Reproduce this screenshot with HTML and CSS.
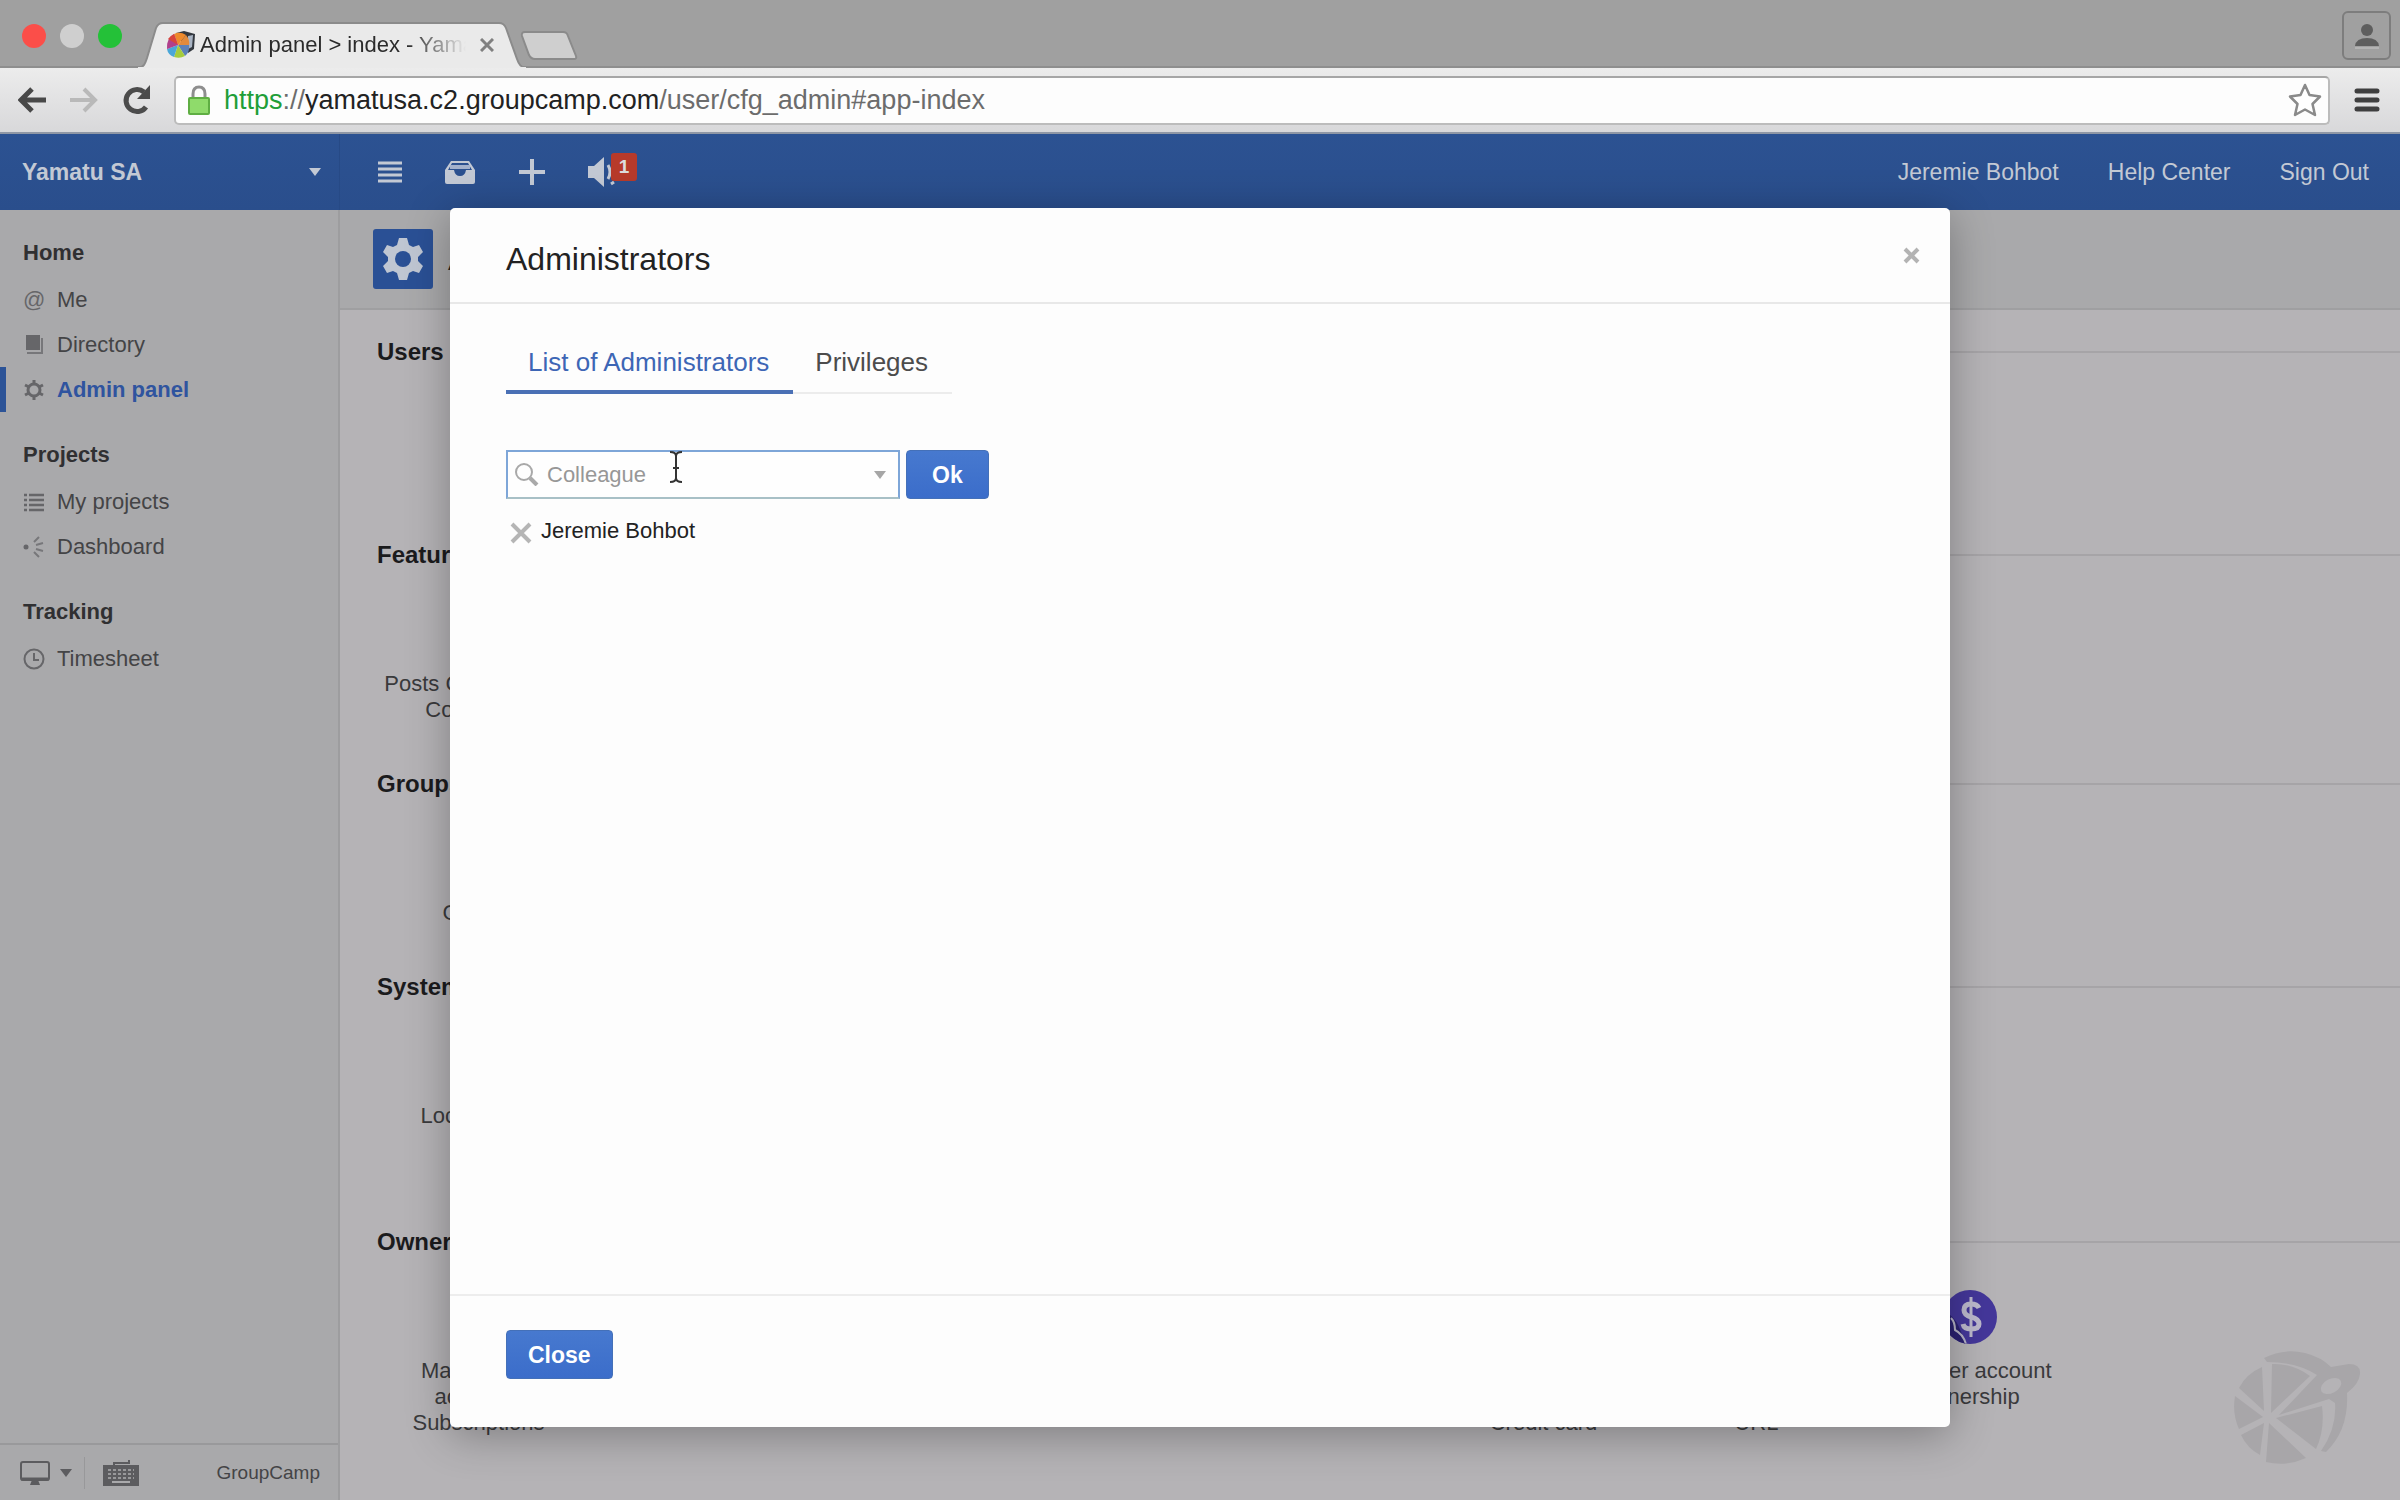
FILE: index.html
```
<!DOCTYPE html>
<html lang="en">
<head>
  <meta charset="UTF-8" />
  <meta name="viewport" content="width=device-width, initial-scale=1.0"/>
  <title>Admin panel &gt; index - Yamatu SA</title>
  <link rel="stylesheet" href="styles.css">
</head>
<body>
  <!-- browser window -->
  <div class="tabstrip">
    <div class="lights">
      <span class="light red"></span>
      <span class="light gray"></span>
      <span class="light green"></span>
    </div>
    <div class="tab">
      <svg class="tab-shape" viewBox="0 0 388 46" preserveAspectRatio="none">
        <path d="M0 46 C6 45 7 42 9 36 L18 6 Q20 1 25 1 H361 Q366 1 368 6 L379 37 C381 43 383 45 388 46 Z" fill="#eaeaea" stroke="#8b8b8b" stroke-width="2"/>
        <path d="M0 46 H388" stroke="#eaeaea" stroke-width="2"/>
      </svg>
      <svg class="favicon" viewBox="0 0 30 28">
        <path d="M10 2 L18 0 L29 3 L28 18 L22 22 Z" fill="#33383f"/>
        <path d="M22 5 L27 4 L26 16 L22 18 Z" fill="#a9b4c4"/>
        <path d="M12 14 L8 3 Q14 0 20 4 Z" fill="#ee8a2c"/>
        <path d="M12 14 L20 4 Q24 9 23 14 Z" fill="#e08a3c"/>
        <path d="M12 14 L23 14 Q24 21 19 25 Z" fill="#5b81b8"/>
        <path d="M12 14 L19 25 Q14 28 8 26 Z" fill="#a5cc3c"/>
        <path d="M12 14 L8 26 Q2 24 1 18 Z" fill="#4aa7d8"/>
        <path d="M12 14 L1 18 Q0 8 8 3 Z" fill="#b0408c"/>
        <path d="M12 14 L2 8 Q4 5 8 3 Z" fill="#d8443c"/>
      </svg>
      <span class="tab-title">Admin panel &gt; index - Yamatu</span>
      <button class="tab-close" aria-label="Close tab">
        <svg width="14" height="14" viewBox="0 0 14 14"><path d="M1 1 L13 13 M13 1 L1 13" stroke="#808080" stroke-width="3"/></svg>
      </button>
    </div>
    <button class="newtab" aria-label="New tab">
      <svg width="60" height="30" viewBox="0 0 60 30"><path d="M5 1 H43 Q47 1 48 5 L56 25 Q57 28 54 28 H15 Q11 28 9 24 L2 5 Q1 1 5 1 Z" fill="#cfcfcf" stroke="#8b8b8b" stroke-width="2"/></svg>
    </button>
    <button class="profile" aria-label="Profile">
      <svg width="26" height="26" viewBox="0 0 26 26"><circle cx="13" cy="7" r="6" fill="#5e5e5e"/><path d="M1 23 Q2 15 13 15 Q24 15 25 23 Z" fill="#5e5e5e"/><path d="M1 25 H25" stroke="#b4b4b4" stroke-width="2"/></svg>
    </button>
  </div>

  <div class="toolbar">
    <button aria-label="Back"><svg width="28" height="26" viewBox="0 0 28 26"><path d="M14 2 L3 13 L14 24 M3 13 H28" fill="none" stroke="#484848" stroke-width="5"/></svg></button>
    <button aria-label="Forward"><svg width="28" height="26" viewBox="0 0 28 26"><path d="M14 2 L25 13 L14 24 M25 13 H0" fill="none" stroke="#b9b9b9" stroke-width="4"/></svg></button>
    <button aria-label="Reload"><svg width="28" height="30" viewBox="0 0 28 30"><path d="M24 22 A11 11 0 1 1 22 7" fill="none" stroke="#4c4c4c" stroke-width="5"/><path d="M28 0 V14 H15 Z" fill="#4c4c4c"/></svg></button>
    <div class="address" role="textbox" aria-label="Address">
      <svg width="22" height="30" viewBox="0 0 22 30"><path d="M5 15 V9 Q5 2 11 2 Q17 2 17 9 V15" fill="none" stroke="#8e8e8e" stroke-width="3"/><rect x="1" y="13" width="20" height="16" rx="1" fill="#8fdb6b" stroke="#5fae43" stroke-width="2"/></svg>
      <span class="url"><span class="scheme">https</span><span class="path">://</span>yamatusa.c2.groupcamp.com<span class="path">/user/cfg_admin#app-index</span></span>
      <svg class="star" width="34" height="34" viewBox="0 0 34 34"><path d="M17 2 L21.500 12 L32 13.500 L24.500 21 L27 32 L17 26.500 L7 32 L9.500 21 L2 13.500 L12.500 12 Z" fill="#fff" stroke="#8a8a8a" stroke-width="2.500" stroke-linejoin="round"/></svg>
    </div>
    <button aria-label="Menu"><svg width="26" height="26" viewBox="0 0 26 26"><path d="M3 4 H23 M3 13 H23 M3 22 H23" stroke="#3f3f3f" stroke-width="5" stroke-linecap="round"/></svg></button>
  </div>

  <!-- GroupCamp -->
  <div class="app">
    <header class="nav">
      <button class="company">Yamatu SA <span class="caret"></span></button>
      <div class="nav-icons">
        <button aria-label="Menu"><svg width="24" height="22" viewBox="0 0 24 22"><path d="M0 2 H24 M0 8 H24 M0 14 H24 M0 20 H24" stroke="#c3c9d4" stroke-width="3"/></svg></button>
        <button aria-label="Inbox"><svg width="32" height="24" viewBox="0 0 32 24"><path d="M7 1 H25 L31 10 V22 Q31 24 29 24 H3 Q1 24 1 22 V10 Z" fill="#c3c9d4"/><path d="M8 3 H24 L28 10 H22 Q21 16 16 16 Q11 16 10 10 H4 Z" fill="#2b508f"/><path d="M6 7 H26" stroke="#a3b1cc" stroke-width="4"/></svg></button>
        <button aria-label="Add"><svg width="28" height="28" viewBox="0 0 28 28"><path d="M14 1 V27 M1 14 H27" stroke="#c3c9d4" stroke-width="4"/></svg></button>
        <button class="alerts" aria-label="Notifications">
          <svg width="28" height="30" viewBox="0 0 28 30"><path d="M0 9 H6 L16 0 V30 L6 21 H0 Z" fill="#c3c9d4"/><path d="M20 8 Q24 15 20 22 M23 27 L26 25" fill="none" stroke="#c3c9d4" stroke-width="3"/></svg>
          <span class="badge">1</span>
        </button>
      </div>
      <nav class="nav-links">
        <a href="#">Jeremie Bohbot</a>
        <a href="#">Help Center</a>
        <a href="#">Sign Out</a>
      </nav>
    </header>

    <div class="main">
      <aside class="sidebar">
        <nav class="menu">
          <h2>Home</h2>
          <a href="#"><span class="icon at">@</span>Me</a>
          <a href="#"><svg class="icon" viewBox="0 0 22 22"><path d="M3 1 H17 V16 H3 Z" fill="#666669"/><path d="M4 19 H19 V4" fill="none" stroke="#77777a" stroke-width="2"/></svg>Directory</a>
          <a href="#" class="active"><svg class="icon" viewBox="0 0 22 22"><circle cx="11" cy="11" r="6" fill="none" stroke="#666669" stroke-width="3"/><path d="M11 1 V5 M11 17 V21 M2 6 L6 8 M16 14 L20 16 M2 16 L6 14 M16 8 L20 6" stroke="#666669" stroke-width="3"/></svg>Admin panel</a>
          <h2>Projects</h2>
          <a href="#"><svg class="icon" viewBox="0 0 22 22"><path d="M1 4 H4 M1 9 H4 M1 14 H4 M1 19 H4 M6 4 H21 M6 9 H21 M6 14 H21 M6 19 H21" stroke="#666669" stroke-width="2.500"/></svg>My projects</a>
          <a href="#"><svg class="icon" viewBox="0 0 22 22"><circle cx="3" cy="11" r="2.500" fill="#666669"/><path d="M11 6 L16 1 M13 9 L20 7 M13 13 L20 15 M11 16 L16 21" stroke="#77777a" stroke-width="2"/></svg>Dashboard</a>
          <h2>Tracking</h2>
          <a href="#"><svg class="icon" viewBox="0 0 22 22"><circle cx="11" cy="11" r="9.500" fill="none" stroke="#666669" stroke-width="2"/><path d="M11 5 V12 H16" fill="none" stroke="#666669" stroke-width="2"/></svg>Timesheet</a>
        </nav>
        <div class="side-foot">
          <button class="screen" aria-label="Display">
            <svg width="30" height="26" viewBox="0 0 30 26"><rect x="1" y="2" width="28" height="18" rx="2" fill="none" stroke="#5c5c5f" stroke-width="2"/><path d="M1 19 H29" stroke="#5c5c5f" stroke-width="3"/><path d="M12 20 H18 L20 25 H10 Z" fill="#5c5c5f"/></svg>
            <span class="caret"></span>
          </button>
          <button class="keys" aria-label="Keyboard shortcuts">
            <svg width="38" height="28" viewBox="0 0 38 28"><path d="M12 7 V4 H27 V1" fill="none" stroke="#5c5c5f" stroke-width="2"/><rect x="1" y="6" width="36" height="21" fill="#5c5c5f"/><path d="M6 11 H32 M6 15 H32 M6 19 H32" stroke="#98989a" stroke-width="2" stroke-dasharray="3 2"/><path d="M10 23 H28" stroke="#a9a9ab" stroke-width="2"/></svg>
          </button>
          <a href="#">GroupCamp</a>
        </div>
      </aside>

      <main class="content">
        <div class="page-head">
          <svg width="60" height="60" viewBox="0 0 60 60"><rect width="60" height="60" rx="3" fill="#2a5095"/><path d="M26 9 H34 L36 16 L40 18 L46 16 L50 23 L45 28 V32 L50 37 L46 44 L40 42 L36 44 L34 51 H26 L24 44 L20 42 L14 44 L10 37 L15 32 V28 L10 23 L14 16 L20 18 L24 16 Z" fill="#bfc6d2"/><circle cx="30" cy="30" r="8" fill="#2a5095"/></svg>
          <h1>Admin panel</h1>
        </div>

        <div class="sections">
          <section>
            <h3>Users</h3>
            <div class="tiles">
              <a href="#" class="tile"><span class="dot"></span>Add</a>
            </div>
          </section>
          <section>
            <h3>Features</h3>
            <div class="tiles">
              <a href="#" class="tile"><span class="dot"></span>Posts Categories &amp;<br>Comments</a>
            </div>
          </section>
          <section>
            <h3>Groups</h3>
            <div class="tiles">
              <a href="#" class="tile"><span class="dot"></span>Groups</a>
            </div>
          </section>
          <section>
            <h3>System</h3>
            <div class="tiles">
              <a href="#" class="tile"><span class="dot"></span>Localization</a>
              <a href="#" class="tile"><span class="dot"></span>Logo<br>and<br>colors</a>
            </div>
          </section>
          <section>
            <h3>Owner</h3>
            <div class="tiles">
              <a href="#" class="tile"><span class="dot"></span>Manage my<br>accounts<br>Subscriptions</a>
              <a href="#" class="tile"><span class="dot"></span>Invoices</a>
              <a href="#" class="tile"><span class="dot"></span>Storage</a>
              <a href="#" class="tile"><span class="dot"></span>Backup</a>
              <a href="#" class="tile"><span class="dot"></span>Security</a>
              <a href="#" class="tile"><span class="dot"></span>Update<br>my<br>Credit card</a>
              <a href="#" class="tile"><span class="dot"></span>Change<br>account<br>URL</a>
              <a href="#" class="tile">
                <span class="dot">
                  <svg width="54" height="54" viewBox="0 0 54 54">
                    <path d="M0 27 L6 24 Q14 30 18 42 L24 54 H4 Z" fill="#2a2170"/>
                    <path d="M8 28 Q12 32 12 40 Q20 44 23 54" fill="none" stroke="#b5b3c6" stroke-width="2"/>
                    <path d="M36 18 Q34 14 28 14 Q21 14 21 20 Q21 25 28 27 Q36 29 36 34 Q36 39 28 39 Q21 39 20 34" fill="none" stroke="#bcb9cc" stroke-width="5"/>
                    <path d="M28 7 V47" stroke="#bcb9cc" stroke-width="3"/>
                  </svg>
                </span>
                Transfer account<br>ownership
              </a>
            </div>
          </section>
        </div>

        <svg class="watermark" width="128" height="116" viewBox="0 0 128 116">
          <g fill="#a8a6a9">
            <path d="M31 8 Q50 -2 72 3 Q88 7 98 17 L116 14 Q128 14 127 24 Q126 34 114 43 Q116 80 93 102 L88 101 Q104 78 102 53 L96 49 L46 65 L84 25 Q64 12 34 12 Z"/>
            <path d="M29 17 L31 61 L6 38 Q13 24 29 17 Z"/>
            <path d="M39 14 Q59 13 77 26 L38 63 Z"/>
            <path d="M2 46 L30 67 L6 79 Q-1 64 2 46 Z"/>
            <path d="M8 85 L31 73 L27 105 Q14 98 8 85 Z"/>
            <path d="M36 73 L73 108 Q53 117 33 112 Z"/>
            <path d="M43 68 L89 56 Q92 80 83 99 Z"/>
          </g>
          <ellipse cx="98" cy="36" rx="11" ry="7" transform="rotate(-28 98 36)" fill="#b5b3b6"/>
        </svg>
      </main>
    </div>

    <div class="overlay">
      <div class="modal" role="dialog" aria-labelledby="modalTitle">
        <div class="modal-head">
          <h2 id="modalTitle">Administrators</h2>
          <button class="modal-close" aria-label="Close">
            <svg width="17" height="17" viewBox="0 0 17 17"><path d="M2 2 L15 15 M15 2 L2 15" stroke="#b3b3b3" stroke-width="4"/></svg>
          </button>
        </div>
        <div class="modal-body">
          <div class="tabs">
            <a href="#" class="selected">List of Administrators</a>
            <a href="#">Privileges</a>
          </div>
          <form class="add">
            <div class="combo">
              <svg class="search" width="24" height="24" viewBox="0 0 24 24"><circle cx="9" cy="10" r="8" fill="none" stroke="#a9a9a9" stroke-width="2"/><path d="M15 16 L22 23" stroke="#a9a9a9" stroke-width="4"/></svg>
              <input type="text" placeholder="Colleague" aria-label="Colleague">
              <span class="caret"></span>
              <svg class="pointer" width="14" height="32" viewBox="0 0 14 32"><path d="M1 1 Q7 1 7 5 Q7 1 13 1 M7 4 V28 M1 31 Q7 31 7 27 Q7 31 13 31 M4 17 H10" fill="none" stroke="#333" stroke-width="2"/></svg>
            </div>
            <button type="button" class="btn">Ok</button>
          </form>
          <ul class="admins">
            <li>
              <button aria-label="Remove Jeremie Bohbot"><svg width="22" height="22" viewBox="0 0 22 22"><path d="M2 2 L20 20 M20 2 L2 20" stroke="#b5b5b5" stroke-width="4"/></svg></button>
              Jeremie Bohbot
            </li>
          </ul>
        </div>
        <div class="modal-foot">
          <button class="btn">Close</button>
        </div>
      </div>
    </div>
  </div>
</body>
</html>
```
FILE: styles.css
```
* {
  box-sizing: border-box;
}
body {
  margin: 0;
  height: 100vh;
  display: flex;
  flex-direction: column;
  overflow: hidden;
  font-family: "Liberation Sans", Arial, sans-serif;
  font-size: 22px;
  line-height: 26px;
  color: #222;
}
h1, h2, h3, ul {
  margin: 0;
  padding: 0;
}
a {
  color: inherit;
  text-decoration: none;
}
button {
  font: inherit;
  color: inherit;
  background: none;
  border: none;
  padding: 0;
  cursor: pointer;
}
svg {
  display: block;
  flex: none;
}
.caret {
  border-left: 6px solid transparent;
  border-right: 6px solid transparent;
  border-top: 8px solid #c3c9d4;
}

/* browser tabs */
.tabstrip {
  height: 68px;
  flex: none;
  display: flex;
  align-items: flex-end;
  background: #a0a0a0;
  border-bottom: 2px solid #8e8e8e;
}
.lights {
  display: flex;
  gap: 14px;
  padding: 0 16px 18px 22px;
}
.light {
  width: 24px;
  height: 24px;
  border-radius: 50%;
}
.red { background: #fb4e49; }
.gray { background: #cfcfcf; }
.green { background: #24c138; }
.tab {
  position: relative;
  width: 388px;
  height: 46px;
  margin-bottom: -2px;
  padding: 0 32px 0 28px;
  display: flex;
  align-items: center;
}
.tab-shape {
  position: absolute;
  left: 0;
  top: 0;
  width: 100%;
  height: 100%;
}
.favicon {
  position: relative;
  width: 30px;
  height: 28px;
}
.tab-title {
  position: relative;
  flex: 1;
  margin: 0 14px 0 4px;
  overflow: hidden;
  white-space: nowrap;
  color: #2b2b2b;
  -webkit-mask-image: linear-gradient(to right, #000 78%, transparent);
  mask-image: linear-gradient(to right, #000 78%, transparent);
}
.tab-close {
  position: relative;
}
.newtab {
  margin: 0 auto 5px -6px;
}
.profile {
  width: 49px;
  height: 49px;
  margin: 0 9px 6px 0;
  display: flex;
  align-items: center;
  justify-content: center;
  border: 2px solid #7d7d7d;
  border-radius: 6px;
}
.toolbar {
  height: 66px;
  flex: none;
  display: flex;
  align-items: center;
  padding: 0 20px 0 18px;
  gap: 24px;
  background: linear-gradient(#ececec, #d8d8da);
  border-bottom: 2px solid #8f97a5;
}
.address {
  flex: 1;
  height: 49px;
  display: flex;
  align-items: center;
  gap: 14px;
  padding: 0 6px 0 12px;
  background: #fdfdfd;
  border: 2px solid #bcbcbc;
  border-top-color: #a6a6a6;
  border-radius: 5px;
  font-size: 27px;
  line-height: 32px;
  color: #222;
}
.scheme { color: #1f9e38; }
.path { color: #6c6c6c; }
.star { margin-left: auto; }

/* top bar */
.app {
  position: relative;
  flex: 1;
  min-height: 0;
  display: flex;
  flex-direction: column;
}
.nav {
  height: 76px;
  flex: none;
  display: flex;
  align-items: center;
  background: linear-gradient(#2c5292, #2a4e8c);
  color: #c3c9d4;
  font-size: 23px;
}
.company {
  width: 340px;
  height: 100%;
  padding: 0 18px 0 22px;
  display: flex;
  align-items: center;
  justify-content: space-between;
  border-right: 1px solid #274a86;
  font-weight: bold;
}
.nav-icons {
  display: flex;
  align-items: center;
  gap: 42px;
  padding-left: 38px;
}
.alerts {
  position: relative;
}
.badge {
  position: absolute;
  left: 23px;
  top: -4px;
  width: 26px;
  height: 28px;
  border-radius: 3px;
  background: #b73a2a;
  color: #ddd;
  font-size: 19px;
  font-weight: bold;
  line-height: 28px;
  text-align: center;
}
.nav-links {
  margin-left: auto;
  padding-right: 31px;
  display: flex;
  gap: 49px;
}

/* sidebar */
.main {
  flex: 1;
  min-height: 0;
  display: flex;
}
.sidebar {
  width: 340px;
  flex: none;
  display: flex;
  flex-direction: column;
  background: #a9a9ab;
  border-right: 2px solid #9d9d9f;
}
.menu {
  flex: 1;
  color: #444446;
}
.menu h2 {
  margin: 30px 0 11px 23px;
  font-size: 22px;
  line-height: 26px;
  color: #303032;
}
.menu a {
  height: 45px;
  display: flex;
  align-items: center;
  gap: 12px;
  padding-left: 17px;
  border-left: 6px solid transparent;
}
.menu .active {
  border-left-color: #2c5397;
  color: #2f549f;
  font-weight: bold;
}
.icon {
  width: 22px;
  height: 22px;
}
.at {
  line-height: 22px;
  color: #666669;
}
.side-foot {
  height: 57px;
  flex: none;
  display: flex;
  align-items: center;
  padding: 0 18px 0 20px;
  border-top: 2px solid #99999b;
  font-size: 19px;
  color: #444446;
}
.screen {
  height: 32px;
  display: flex;
  align-items: center;
  gap: 10px;
  padding-right: 12px;
  border-right: 1px solid #98989a;
}
.side-foot .caret {
  border-top-color: #5c5c5f;
}
.keys {
  margin: 0 auto 0 17px;
}

/* admin page */
.content {
  position: relative;
  flex: 1;
  min-width: 0;
  background: #b5b3b6;
}
.page-head {
  height: 100px;
  display: flex;
  align-items: center;
  gap: 15px;
  padding: 0 33px;
  background: #a9a9ab;
  border-bottom: 2px solid #9f9fa1;
}
.page-head h1 {
  font-size: 32px;
  line-height: 36px;
  font-weight: normal;
}
.sections {
  padding: 28px 0 0 32px;
}
section {
  padding-bottom: 47px;
}
section h3 {
  display: flex;
  align-items: center;
  gap: 12px;
  margin-left: 5px;
  font-size: 24px;
  line-height: 28px;
  color: #1b1b1d;
}
section h3::after {
  content: "";
  flex: 1;
  height: 2px;
  background: #a6a4a7;
}
.tiles {
  display: flex;
  padding-top: 34px;
}
.tile {
  width: 213px;
  flex: none;
  text-align: center;
  color: #3a3a3c;
}
.dot {
  display: block;
  width: 54px;
  height: 54px;
  margin: 0 auto 14px;
  border-radius: 50%;
  background: #44379a;
  overflow: hidden;
}
.watermark {
  position: absolute;
  right: 39px;
  bottom: 34px;
}

/* dialog */
.overlay {
  position: absolute;
  inset: 0;
  display: flex;
  justify-content: center;
  padding: 74px 0 73px;
}
.modal {
  width: 62.5%;
  display: flex;
  flex-direction: column;
  background: #fdfdfd;
  border-radius: 5px;
  box-shadow: 0 8px 44px rgba(0,0,0,0.3);
}
.modal-head {
  height: 96px;
  display: flex;
  align-items: center;
  justify-content: space-between;
  padding: 8px 30px 0 56px;
  border-bottom: 2px solid #e8e8e8;
}
.modal-head h2 {
  font-size: 32px;
  line-height: 36px;
  font-weight: normal;
}
.modal-close {
  margin-bottom: 8px;
}
.modal-body {
  flex: 1;
  padding: 34px 56px;
}
.tabs {
  display: flex;
  font-size: 26px;
  line-height: 30px;
  color: #4c4c4c;
}
.tabs a {
  height: 56px;
  padding: 9px 24px 0 22px;
  border-bottom: 2px solid #ececec;
}
.tabs .selected {
  color: #3d66b5;
  border-bottom: 4px solid #4a70b5;
}
.add {
  display: flex;
  gap: 6px;
  margin-top: 56px;
}
.combo {
  position: relative;
}
.combo input {
  width: 394px;
  height: 49px;
  padding: 0 32px 0 39px;
  border: 2px solid #7ea6d8;
  border-bottom-color: #a8c0c6;
  background: #fefefe;
  font: inherit;
}
.combo input::placeholder {
  color: #979797;
  opacity: 1;
}
.search {
  position: absolute;
  left: 9px;
  top: 12px;
}
.combo .caret {
  position: absolute;
  right: 14px;
  top: 21px;
  border-top-color: #a6a6a6;
}
.pointer {
  position: absolute;
  left: 163px;
  top: 1px;
}
.btn {
  height: 49px;
  padding: 0 21px;
  border-radius: 4px;
  background: linear-gradient(#4779cf, #3b6dca);
  border: 1px solid #4470b8;
  color: #fff;
  font-size: 23px;
  font-weight: bold;
}
.add .btn {
  padding: 0 25px;
}
.admins {
  margin-top: 19px;
  list-style: none;
}
.admins li {
  display: flex;
  gap: 9px;
  padding-left: 4px;
}
.admins button {
  padding-top: 4px;
}
.modal-foot {
  padding: 34px 56px 48px;
  border-top: 2px solid #ededed;
}
```
